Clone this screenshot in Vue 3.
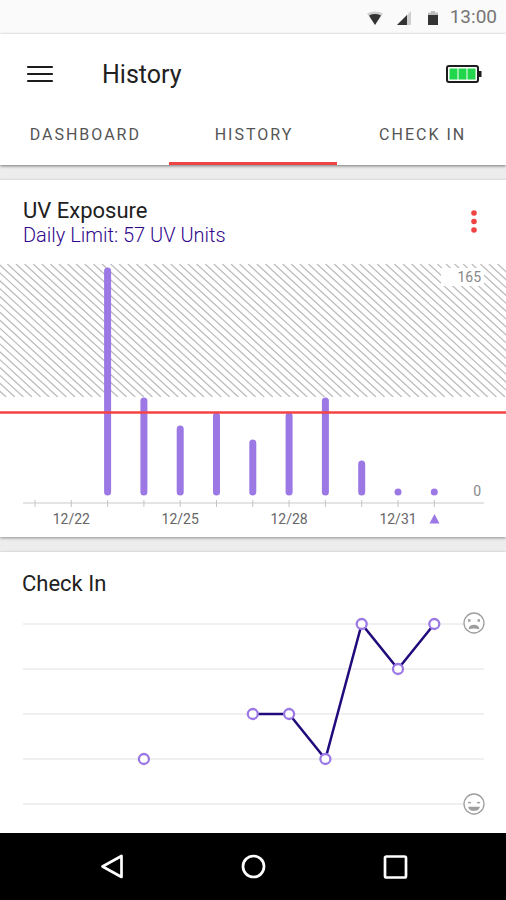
<template>
  <div class="screen">
    <!-- Status bar -->
    <div class="status">
      <svg class="status-icon" viewBox="0 0 16 16">
        <path d="M0 3.500C5 .8 11 .8 16 3.500L8 15z" fill="#cfcfcf" />
        <path d="M2 5.500C6 3.600 10 3.600 14 5.500L8 15z" fill="#333" />
      </svg>
      <svg class="status-icon" viewBox="0 0 16 16">
        <path d="M1 15L15 1v14z" fill="#cfcfcf" />
        <path d="M1 15L11 5v10z" fill="#333" />
      </svg>
      <svg class="status-icon" viewBox="0 0 16 16">
        <path d="M3 2.500h3V1h4v1.500h3V6H3z" fill="#bdbdbd" />
        <path d="M3 5h10v10H3z" fill="#333" />
      </svg>
      <span class="clock">13:00</span>
    </div>

    <!-- Top bar -->
    <header class="topbar">
      <div class="title-row">
        <button class="icon-button" aria-label="Menu">
          <svg width="28" height="20" viewBox="0 0 28 20">
            <path d="M2 3h24M2 10h24M2 17h24" stroke="#1c1c1c" stroke-width="2.200" stroke-linecap="round" />
          </svg>
        </button>
        <h1>History</h1>
        <svg class="battery" width="36" height="20" viewBox="0 0 36 20">
          <rect x="1" y="2" width="31" height="16" rx="2" fill="#fff" stroke="#1c1c1c" stroke-width="2" />
          <rect x="33" y="7" width="2.500" height="6" fill="#1c1c1c" />
          <path d="M3.500 4.500h8v11h-8zM12.500 4.500h8v11h-8zM21.500 4.500h8v11h-8z" fill="#22d64c" />
        </svg>
      </div>
      <nav class="tabs">
        <button
          v-for="tab in tabs"
          :key="tab"
          class="tab"
          :class="{ active: tab === current }"
          @click="current = tab"
        >
          {{ tab }}
        </button>
      </nav>
    </header>

    <!-- UV Exposure -->
    <section class="card">
      <div class="card-head">
        <div>
          <h2>UV Exposure</h2>
          <p class="limit">Daily Limit: 57 UV Units</p>
        </div>
        <button class="icon-button" aria-label="More">
          <svg width="8" height="26" viewBox="0 0 8 26">
            <circle cx="4" cy="4" r="2.800" fill="#f04444" />
            <circle cx="4" cy="12.500" r="2.800" fill="#f04444" />
            <circle cx="4" cy="21" r="2.800" fill="#f04444" />
          </svg>
        </button>
      </div>
      <svg class="chart" viewBox="0 0 506 273">
        <defs>
          <clipPath id="over">
            <rect width="506" height="133" />
          </clipPath>
        </defs>
        <g clip-path="url(#over)" stroke="#bababa" stroke-width="1.200">
          <line v-for="n in 78" :key="n" :x1="hatchX(n)" y1="0" :x2="hatchX(n) + 145" y2="133" />
        </g>
        <rect x="441" y="4" width="43" height="18" fill="#fff" />
        <text class="scale" x="481" y="18">165</text>
        <text class="scale" x="481" y="232">0</text>

        <line x1="23" y1="239" x2="484" y2="239" stroke="#e4e4e4" stroke-width="2" />
        <line v-for="n in 12" :key="n" :x1="dayX(n - 1)" y1="236" :x2="dayX(n - 1)" y2="243" stroke="#c4c4c4" />

        <line
          v-for="bar in bars"
          :key="bar.day"
          :x1="dayX(bar.day)"
          :y1="bar.top"
          :x2="dayX(bar.day)"
          y2="228"
          stroke="#9b78e4"
          stroke-width="7"
          stroke-linecap="round"
        />
        <line x1="0" y1="148.500" x2="506" y2="148.500" stroke="#f44343" stroke-width="2.500" />

        <text v-for="label in labels" :key="label.text" class="date" :x="dayX(label.day)" y="260">
          {{ label.text }}
        </text>
        <path d="M429.500 259.500l5-9.500 5 9.500z" fill="#9b78e4" />
      </svg>
    </section>

    <!-- Check In -->
    <section class="card last">
      <h2 class="check-title">Check In</h2>
      <svg class="chart" viewBox="0 0 506 233">
        <line v-for="n in 5" :key="n" x1="23" :y1="levelY(n - 1)" x2="484" :y2="levelY(n - 1)" stroke="#f0f0f0" stroke-width="2" />
        <polyline :points="trend" fill="none" stroke="#210b7c" stroke-width="2.500" />
        <circle
          v-for="point in points"
          :key="point.day"
          :cx="dayX(point.day)"
          :cy="levelY(point.level)"
          r="5"
          fill="#fff"
          stroke="#9b78e4"
          stroke-width="2.300"
        />
        <g fill="none" stroke="#9e9e9e" stroke-width="1.300">
          <circle cx="474" cy="23" r="10" fill="#fff" />
          <path d="M469.500 28.500C470 24.500 478 24.500 478.500 28.500C475.500 27.500 472.500 27.500 469.500 28.500z" fill="#9e9e9e" />
          <path d="M468 20.500h2.500M477.500 20.500h2.500" stroke-width="2.500" />
          <circle cx="474" cy="204" r="10" fill="#fff" />
          <path d="M469 207.500h10C478 211 470 211 469 207.500z" fill="#9e9e9e" />
          <path d="M468 203q1.500-1 3 0M477 203q1.500-1 3 0" />
        </g>
      </svg>
    </section>

    <!-- Android navigation -->
    <footer class="android-nav">
      <button class="icon-button" aria-label="Back">
        <svg width="28" height="28" viewBox="0 0 28 28">
          <path d="M5.500 13.500L24.500 3v21z" fill="none" stroke="#fff" stroke-width="2.700" stroke-linejoin="round" />
        </svg>
      </button>
      <button class="icon-button" aria-label="Home">
        <svg width="28" height="28" viewBox="0 0 28 28">
          <circle cx="14.500" cy="13.500" r="10.500" fill="none" stroke="#fff" stroke-width="2.700" />
        </svg>
      </button>
      <button class="icon-button" aria-label="Recent apps">
        <svg width="28" height="28" viewBox="0 0 28 28">
          <rect x="4" y="3.500" width="21" height="21" rx="1.500" fill="none" stroke="#fff" stroke-width="2.700" />
        </svg>
      </button>
    </footer>
  </div>
</template>

<script setup>
import { computed, ref } from "vue";

const tabs = ["DASHBOARD", "HISTORY", "CHECK IN"];
const current = ref("HISTORY");

/* ---------- chart scales ---------- */
const dayX = (day) => 35 + day * 36.3;
const levelY = (level) => 24 + level * 45;
const hatchX = (n) => n * 8.6 - 156;

const bars = [
  { day: 2, top: 7 },
  { day: 3, top: 137 },
  { day: 4, top: 165 },
  { day: 5, top: 152 },
  { day: 6, top: 179 },
  { day: 7, top: 152 },
  { day: 8, top: 137 },
  { day: 9, top: 200 },
  { day: 10, top: 227.9 },
  { day: 11, top: 227.9 },
];

const labels = [
  { day: 1, text: "12/22" },
  { day: 4, text: "12/25" },
  { day: 7, text: "12/28" },
  { day: 10, text: "12/31" },
];

const points = [
  { day: 3, level: 3 },
  { day: 6, level: 2 },
  { day: 7, level: 2 },
  { day: 8, level: 3 },
  { day: 9, level: 0 },
  { day: 10, level: 1 },
  { day: 11, level: 0 },
];

// the first check in has no neighbour, so the line starts after it
const trend = computed(() =>
  points
    .slice(1)
    .map((p) => `${dayX(p.day)},${levelY(p.level)}`)
    .join(" ")
);
</script>

<style>
body {
  margin: 0;
  background: #ededed;
}
</style>

<style scoped>
.screen {
  display: flex;
  flex-direction: column;
  min-height: 100vh;
  font-family: Roboto, "Liberation Sans", sans-serif;
  color: #212121;
  background: #ededed;
}

h1,
h2,
p {
  margin: 0;
}

button {
  padding: 0;
  border: 0;
  background: none;
  font: inherit;
  color: inherit;
}

.icon-button {
  display: flex;
  align-items: center;
  justify-content: center;
}

.status {
  display: flex;
  align-items: center;
  justify-content: flex-end;
  gap: 13px;
  height: 34px;
  padding-right: 9px;
  background: #fafafa;
}

.status-icon {
  width: 16px;
  height: 16px;
  margin-top: 2px;
}

.clock {
  font-size: 19px;
  line-height: 34px;
  color: #757575;
  margin-left: -4px;
}

.topbar {
  background: #fff;
  box-shadow: 0 1px 3px rgba(0, 0, 0, 0.5);
}

.title-row {
  display: flex;
  align-items: center;
  height: 80px;
  padding: 0 24px 0 26px;
}

h1 {
  margin-left: 48px;
  font-size: 25px;
  font-weight: 400;
}

.battery {
  margin-left: auto;
}

.tabs {
  display: grid;
  grid-template-columns: repeat(3, 1fr);
}

.tab {
  height: 51px;
  padding: 0 0 8px 2px;
  border-bottom: 3px solid transparent;
  font-size: 16px;
  letter-spacing: 2px;
  color: #555;
}

.tab.active {
  border-color: #ee4444;
}

.card {
  margin-top: 15px;
  background: #fff;
  box-shadow: 0 1px 3px rgba(0, 0, 0, 0.4);
}

.card.last {
  flex: 1;
}

.card-head {
  display: flex;
  align-items: center;
  justify-content: space-between;
  height: 84px;
  padding: 0 28px 0 23px;
}

h2 {
  font-size: 22px;
  line-height: 26px;
  font-weight: 400;
}

.limit {
  font-size: 20px;
  line-height: 22px;
  font-weight: 300;
  color: #30088c;
}

.check-title {
  padding: 19px 22px 3px;
}

.chart {
  display: block;
  width: 100%;
}

.scale {
  font-size: 14px;
  fill: #888;
  text-anchor: end;
}

.date {
  font-size: 14px;
  fill: #666;
  text-anchor: middle;
}

.android-nav {
  display: flex;
  align-items: center;
  justify-content: center;
  gap: 114px;
  height: 67px;
  background: #000;
}
</style>
